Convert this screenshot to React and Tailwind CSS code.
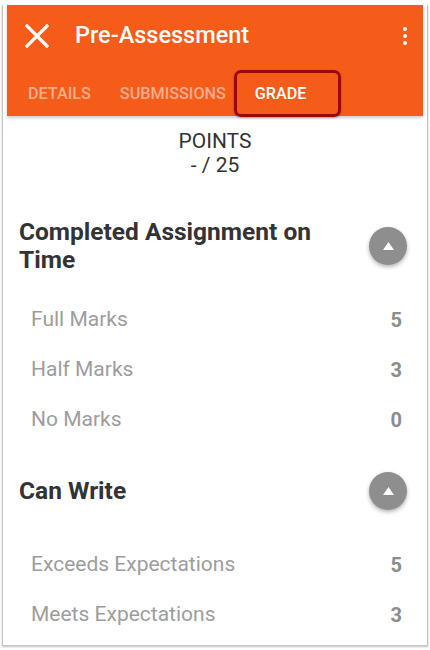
import React from "react";

const rubric = [
  {
    title: "Completed Assignment on Time",
    ratings: [
      { label: "Full Marks", points: 5 },
      { label: "Half Marks", points: 3 },
      { label: "No Marks", points: 0 },
    ],
  },
  {
    title: "Can Write",
    ratings: [
      { label: "Exceeds Expectations", points: 5 },
      { label: "Meets Expectations", points: 3 },
    ],
  },
];

function CollapseButton() {
  return (
    <button className="w-[38px] h-[38px] shrink-0 rounded-full bg-[#8e8e8e] shadow-[0_2px_4px_rgba(0,0,0,0.3)] flex items-center justify-center">
      <svg width="11" height="8" viewBox="0 0 11 8">
        <polygon points="5.5,0 11,8 0,8" fill="#fff" />
      </svg>
    </button>
  );
}

function Criterion({ title, ratings, first }) {
  return (
    <section className={first ? "mt-[41px]" : "mt-[27px]"}>
      {/* Заголовок критерия */}
      <div className="flex items-center justify-between pl-[12px] pr-[16px]">
        <h2 className="text-[24.5px] leading-[28px] font-bold text-[#333] w-[320px]">
          {title}
        </h2>
        <CollapseButton />
      </div>

      <ul className={first ? "mt-[21px]" : "mt-[30px]"}>
        {ratings.map((r) => (
          <li
            key={r.label}
            className="h-[50px] flex items-center justify-between pl-[24px] pr-[21px]"
          >
            <span className="text-[21px] text-[#9d9d9d]">{r.label}</span>
            <span className="text-[20px] font-bold text-[#8c8c8c]">
              {r.points}
            </span>
          </li>
        ))}
      </ul>
    </section>
  );
}

export default function App() {
  return (
    <div
      className="bg-white h-[650px] pt-[5px] overflow-hidden"
      style={{ fontFamily: "Roboto, 'Noto Sans', sans-serif" }}
    >
      <div className="ml-[2px] w-[426px] h-[641px] border-l border-r border-b border-[#c4c4c4] shadow-[0_1px_2px_rgba(0,0,0,0.25)] pl-[4px] pr-[4px] flex flex-col">
        {/* Шапка */}
        <header className="bg-[#f55b19] text-white shadow-[0_2px_3px_rgba(0,0,0,0.2)] relative z-10">
          <div className="h-[62px] flex items-center pl-[18px] pr-[16px]">
            <svg width="24" height="24" viewBox="0 0 24 24">
              <path
                d="M2 2 L22 22 M22 2 L2 22"
                stroke="#fff"
                strokeWidth="3.2"
                strokeLinecap="square"
              />
            </svg>
            <h1 className="ml-[26px] text-[23.5px] font-medium flex-1">
              Pre-Assessment
            </h1>
            <div className="flex flex-col gap-[3px] items-center">
              <span className="w-[4px] h-[4px] rounded-full bg-white" />
              <span className="w-[4px] h-[4px] rounded-full bg-white" />
              <span className="w-[4px] h-[4px] rounded-full bg-white" />
            </div>
          </div>
          <nav className="relative h-[49px] flex items-center pt-[5px] pl-[21px] gap-[29px] text-[16.2px] font-medium">
            <span className="text-white/50">DETAILS</span>
            <span className="text-white/50">SUBMISSIONS</span>
            <span className="text-white">GRADE</span>
            <div className="absolute left-[227px] top-[3px] w-[107px] h-[47px] border-[3px] border-[#990a0a] rounded-[7px] shadow-[0_1px_2px_rgba(0,0,0,0.3)]" />
          </nav>
        </header>

        {/* Баллы */}
        <div className="mt-[13px] text-center text-[21px] leading-[24px] text-[#333]">
          <div>POINTS</div>
          <div>- / 25</div>
        </div>

        {rubric.map((c, i) => (
          <Criterion key={c.title} {...c} first={i === 0} />
        ))}
      </div>
    </div>
  );
}
